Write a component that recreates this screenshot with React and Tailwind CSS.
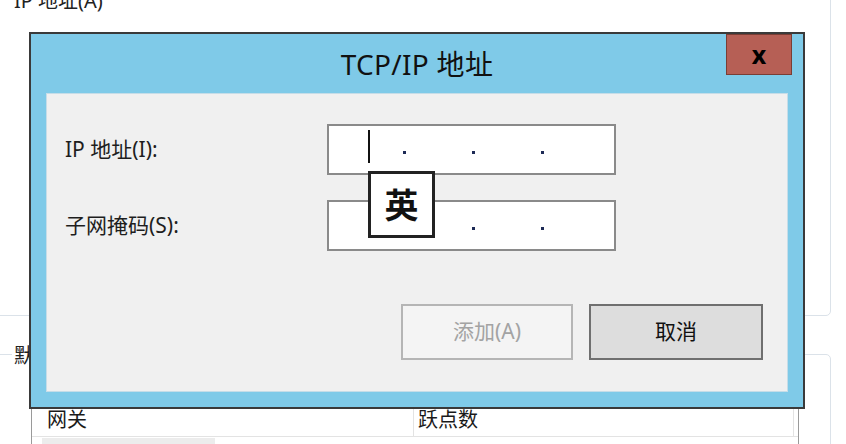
import React from "react";

const FONT = { fontFamily: '"Noto Sans", "Noto Sans CJK SC", sans-serif' };

// one IPv4 box: four octet slots separated by dots
function IpField({ showCursor }) {
  return (
    <div className="relative h-[51px] w-[289px] border-2 border-[#8a8a8a] bg-white">
      <div className="flex h-full pl-[6px]">
        {[0, 1, 2, 3].map((i) => (
          <div key={i} className="relative h-full w-[69px]">
            {i < 3 && (
              <span className="absolute right-[-2px] top-[25px] h-[3px] w-[3px] bg-[#1d2a55]" />
            )}
          </div>
        ))}
      </div>
      {showCursor && <span className="absolute left-[39px] top-[4px] h-[33px] w-[2px] bg-[#111]" />}
    </div>
  );
}

function BackgroundPage() {
  return (
    <>
      {/* property sheet behind the dialog */}
      <div className="absolute left-[14px] top-[-14px] text-[20px] text-[#222]">IP 地址(A)</div>
      <div className="absolute left-[-6px] top-[-10px] h-[326px] w-[837px] rounded-[5px] border border-[#dbe2e9]" />
      <div className="absolute left-[-6px] top-[354px] h-[120px] w-[837px] rounded-[5px] border border-[#dbe2e9]" />
      <div className="absolute left-[12px] top-[342px] bg-white px-[2px] text-[20px] leading-[28px] text-[#222]">默认网关</div>

      {/* gateway list */}
      <div className="absolute left-[31px] top-[380px] h-[80px] w-[768px] border-x border-[#9a9a9a] bg-white">
        <div className="mt-[27px] flex h-[30px] border-b border-[#e3e3e3] text-[20px] leading-[26px] text-[#1a1a1a]">
          <div className="w-[382px] border-r border-[#e3e3e3] pl-[15px]">网关</div>
          <div className="flex-1 border-r border-[#e3e3e3] pl-[4px]">跃点数</div>
          <div className="w-[4px]" />
        </div>
        <div className="ml-[10px] mt-[1px] h-[10px] w-[173px] bg-[#ececec]" />
      </div>
    </>
  );
}

export default function App() {
  return (
    <div className="relative h-[444px] w-[846px] overflow-hidden bg-white" style={FONT}>
      <BackgroundPage />

      {/* TCP/IP address dialog */}
      <div className="absolute left-[29px] top-[32px] flex h-[377px] w-[776px] flex-col border-2 border-[#3a3a3a] bg-[#7fcae8]">
        <div className="relative flex h-[59px] shrink-0 items-center justify-center">
          <span className="text-[28px] leading-none tracking-[0.3px] text-[#111]">TCP/IP 地址</span>
          <button className="absolute right-[11px] top-0 flex h-[41px] w-[66px] items-center justify-center border border-[#7a3d34] bg-[#b65f55] text-[25px] font-bold leading-none text-black">
            x
          </button>
        </div>

        <div className="relative mx-[15px] mb-[15px] flex flex-1 flex-col border border-[#c6dde8] bg-[#f0f0f0] pl-[18px] pr-[24px] pt-[30px]">
          <div className="grid grid-cols-[262px_289px] items-center gap-y-[25px] text-[21px] text-[#1e1e1e]">
            <span>IP 地址(I):</span>
            <IpField showCursor />
            <span>子网掩码(S):</span>
            <IpField />
          </div>

          <div className="mt-[53px] flex justify-end gap-[16px] text-[21px]">
            <button className="h-[56px] w-[172px] border-2 border-[#b5b5b5] bg-[#f4f4f4] text-[#a3a3a3]">添加(A)</button>
            <button className="h-[56px] w-[174px] border-2 border-[#6f6f6f] bg-[#dddddd] text-[#111]">取消</button>
          </div>

          {/* input method indicator */}
          <div className="absolute left-[321px] top-[77px] flex h-[67px] w-[67px] items-center justify-center border-[3px] border-[#222] bg-white text-[34px] font-bold leading-none text-[#111]">
            英
          </div>
        </div>
      </div>
    </div>
  );
}
